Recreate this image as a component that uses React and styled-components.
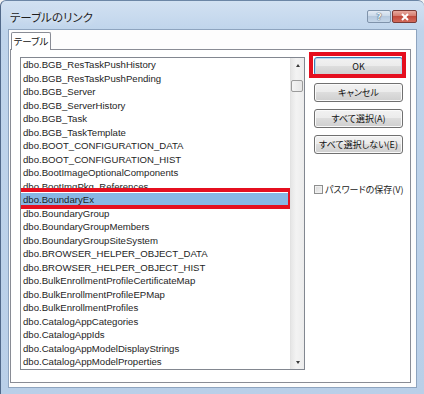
import styled, { createGlobalStyle } from 'styled-components';

const GlobalStyle = createGlobalStyle`
  html, body {
    margin: 0;
    padding: 0;
    background: #f3f3f3;
    overflow: hidden;
  }
  body {
    font-family: "Noto Sans CJK JP", "Noto Sans", sans-serif;
    font-feature-settings: "palt";
    color: #1a1a1a;
  }
`;

const tables = [
  'dbo.BGB_ResTaskPushHistory',
  'dbo.BGB_ResTaskPushPending',
  'dbo.BGB_Server',
  'dbo.BGB_ServerHistory',
  'dbo.BGB_Task',
  'dbo.BGB_TaskTemplate',
  'dbo.BOOT_CONFIGURATION_DATA',
  'dbo.BOOT_CONFIGURATION_HIST',
  'dbo.BootImageOptionalComponents',
  'dbo.BootImgPkg_References',
  'dbo.BoundaryEx',
  'dbo.BoundaryGroup',
  'dbo.BoundaryGroupMembers',
  'dbo.BoundaryGroupSiteSystem',
  'dbo.BROWSER_HELPER_OBJECT_DATA',
  'dbo.BROWSER_HELPER_OBJECT_HIST',
  'dbo.BulkEnrollmentProfileCertificateMap',
  'dbo.BulkEnrollmentProfileEPMap',
  'dbo.BulkEnrollmentProfiles',
  'dbo.CatalogAppCategories',
  'dbo.CatalogAppIds',
  'dbo.CatalogAppModelDisplayStrings',
  'dbo.CatalogAppModelProperties',
];

export default function App() {
  return (
    <>
      <GlobalStyle />
      <Window>
        <TitleBar>
          <Title>テーブルのリンク</Title>
          <CaptionButtons>
            <HelpButton>?</HelpButton>
            <CloseButton>
              <svg width="10" height="8" viewBox="0 0 10 8">
                <path d="M2 1 L8 7 M8 1 L2 7" stroke="#fff" strokeWidth="2" />
              </svg>
            </CloseButton>
          </CaptionButtons>
        </TitleBar>
        <Client>
          <TabStrip>
            <Tab>テーブル</Tab>
          </TabStrip>
          <Panel>
            <ListBox>
              <Items>
                {tables.map((name) => (
                  <Row key={name} selected={name === 'dbo.BoundaryEx'}>
                    {name}
                  </Row>
                ))}
              </Items>
              <ScrollBar>
                <ArrowButton>
                  <Arrow up />
                </ArrowButton>
                <Thumb />
                <Track />
                <ArrowButton>
                  <Arrow />
                </ArrowButton>
              </ScrollBar>
            </ListBox>
            <Actions>
              <Marked>
                <Button isDefault>OK</Button>
              </Marked>
              <Button>キャンセル</Button>
              <Button>すべて選択(A)</Button>
              <Button>すべて選択しない(E)</Button>
              <CheckLabel>
                <Box />
                パスワードの保存(V)
              </CheckLabel>
            </Actions>
          </Panel>
        </Client>
      </Window>
    </>
  );
}

const Window = styled.div`
  width: 424px;
  height: 396px;
  box-sizing: border-box;
  border-left: 1px solid #51698a;
  border-top: 1px solid #6c86a6;
  border-radius: 6px 6px 0 0;
  background: linear-gradient(#d2e1f2, #bfd4eb 30px, #b9cfe8);
  display: flex;
  flex-direction: column;
  padding: 0 7px 8px 7px;
`;

const TitleBar = styled.div`
  height: 28px;
  display: flex;
  align-items: center;
  justify-content: space-between;
  padding-left: 2px;
`;

const Title = styled.span`
  font-size: 11.5px;
  color: #1e1e1e;
  margin-top: 3px;
  text-shadow: 0 0 6px rgba(255, 255, 255, 0.9);
`;

const CaptionButtons = styled.div`
  display: flex;
  gap: 1px;
  margin-top: 3px;
`;

const CaptionButton = styled.div`
  height: 13px;
  box-sizing: border-box;
  border-radius: 2px;
  display: flex;
  align-items: center;
  justify-content: center;
  font-family: "DejaVu Sans", sans-serif;
  font-weight: bold;
  font-size: 9px;
`;

const HelpButton = styled(CaptionButton)`
  width: 24px;
  border: 1px solid #7f93ab;
  background: linear-gradient(#e3ebf5, #c8d7e8 50%, #b6c9de 50%, #c5d6e9);
  color: #eef3f8;
  text-shadow: 0 0 1px #3a4a5c, 0 0 1px #3a4a5c;
`;

const CloseButton = styled(CaptionButton)`
  width: 25px;
  border: 1px solid #7a3a36;
  background: linear-gradient(#e8a99e, #d3776a 50%, #c24a3c 50%, #d36a5b);
`;

const Client = styled.div`
  flex: 1;
  background: #fdfdfd;
  border: 1px solid #8ea4bf;
  display: flex;
  flex-direction: column;
  padding: 2px 5px 4px 1px;
`;

const TabStrip = styled.div`
  display: flex;
  padding-left: 1px;
  height: 17px;
  position: relative;
  z-index: 1;
`;

const Tab = styled.div`
  width: 40px;
  height: 18px;
  box-sizing: border-box;
  border: 1px solid #898c95;
  border-bottom: none;
  border-radius: 2px 2px 0 0;
  background: #fff;
  font-size: 9.5px;
  line-height: 16px;
  text-align: center;
  color: #111;
`;

const Panel = styled.div`
  flex: 1;
  display: flex;
  gap: 9px;
  border: 1px solid #898c95;
  background: #fff;
  padding: 7px 6px 12px 9px;
`;

const ListBox = styled.div`
  width: 285px;
  box-sizing: border-box;
  border: 1px solid #828790;
  display: flex;
`;

const Items = styled.div`
  flex: 1;
  overflow: hidden;
  padding-top: 0;
`;

const Row = styled.div`
  height: 13.5px;
  line-height: 13.5px;
  padding-left: 2px;
  font-family: "Liberation Sans", Arial, sans-serif;
  font-size: 9.6px;
  color: #1e1e1e;
  white-space: nowrap;
  position: relative;
  background: ${(p) => (p.selected ? '#88b7e4' : 'transparent')};

  ${(p) =>
    p.selected &&
    `
    &::after {
      content: '';
      position: absolute;
      left: -5px;
      right: -2px;
      top: -5px;
      bottom: -2px;
      border: 4px solid #e50f1f;
    }
  `}
`;

const ScrollBar = styled.div`
  width: 13px;
  display: flex;
  flex-direction: column;
  background: linear-gradient(90deg, #e6e6e6, #f3f3f3 40%, #ececec);
  border-left: 1px solid #e2e2e2;
`;

const ArrowButton = styled.div`
  height: 14px;
  display: flex;
  align-items: center;
  justify-content: center;
`;

const Arrow = styled.div`
  width: 0;
  height: 0;
  border-left: 2.5px solid transparent;
  border-right: 2.5px solid transparent;
  ${(p) =>
    p.up ? 'border-bottom: 3px solid #3a3a3a;' : 'border-top: 3px solid #3a3a3a;'}
`;

const Thumb = styled.div`
  margin: 8px 1px 0 0;
  height: 12px;
  box-sizing: border-box;
  border: 1px solid #9b9b9b;
  border-radius: 2px;
  background: linear-gradient(90deg, #f4f4f4, #e6e6e6);
`;

const Track = styled.div`
  flex: 1;
`;

const Actions = styled.div`
  width: 89px;
  display: flex;
  flex-direction: column;
  gap: 7px;
`;

const Marked = styled.div`
  position: relative;

  &::after {
    content: '';
    position: absolute;
    left: -5px;
    right: -3px;
    top: -5px;
    bottom: -2px;
    border: 4px solid #e50f1f;
  }
`;

const Button = styled.div`
  height: 19px;
  box-sizing: border-box;
  border: 1px solid ${(p) => (p.isDefault ? '#3c7fb1' : '#707070')};
  border-radius: 3px;
  background: linear-gradient(#f2f2f2, #ebebeb 50%, #dddddd 50%, #cfcfcf);
  box-shadow: inset 0 0 0 1px ${(p) => (p.isDefault ? '#b8dcf4' : '#fafafa')};
  display: flex;
  align-items: center;
  justify-content: center;
  font-size: 9px;
  color: #111;
  white-space: nowrap;
`;

const CheckLabel = styled.div`
  margin-top: 22px;
  display: flex;
  align-items: center;
  gap: 2px;
  font-size: 9px;
  color: #222;
  white-space: nowrap;
`;

const Box = styled.div`
  flex-shrink: 0;
  width: 9px;
  height: 9px;
  box-sizing: border-box;
  border: 1px solid #8e8f8f;
  background: linear-gradient(135deg, #d8d8d8, #f4f4f4);
  box-shadow: inset 0 0 0 1px #f0f0f0;
`;
